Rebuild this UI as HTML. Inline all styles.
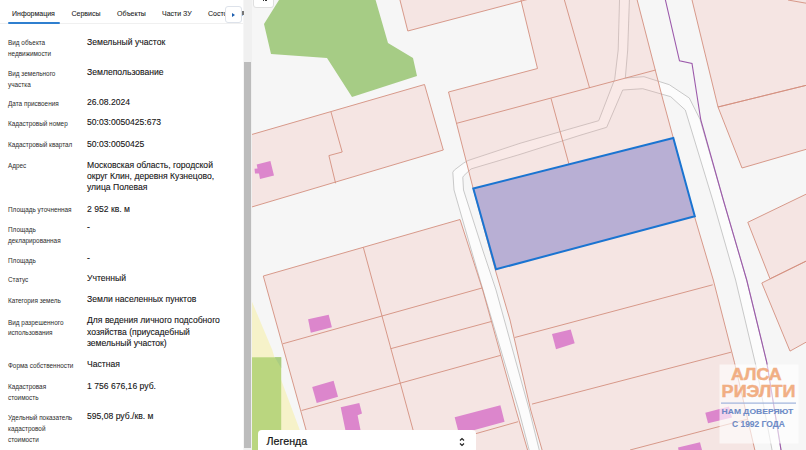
<!DOCTYPE html>
<html><head><meta charset="utf-8">
<style>
*{margin:0;padding:0;box-sizing:border-box}
html,body{width:806px;height:450px;overflow:hidden;background:#f6f6f6;font-family:"Liberation Sans",sans-serif}
#map{position:absolute;left:0;top:0;width:806px;height:450px}
#panel{position:absolute;left:0;top:0;width:243px;height:450px;background:#fff;color:#222}
.tab{position:absolute;top:8.7px;font-size:7px;line-height:9px;color:#1a1a1a;-webkit-text-stroke:0.08px #1a1a1a;white-space:nowrap}
#tabline{position:absolute;left:0;top:23px;width:243px;height:1px;background:#f0f0f0}
#tabact{position:absolute;left:8px;top:22px;width:52px;height:2px;background:#2f7fcf;border-radius:1px}
#arrow{position:absolute;left:225px;top:6px;width:16.5px;height:16.5px;background:#fff;border:1px solid #dde2ea;border-radius:3px}
#arrow:after{content:"";position:absolute;left:6px;top:5.7px;border-left:3px solid #1d5fb0;border-top:2.5px solid transparent;border-bottom:2.5px solid transparent}
#track{position:absolute;left:243.7px;top:0;width:8.3px;height:450px;background:#f0f0f0}
#thumb{position:absolute;left:244px;top:62.3px;width:7px;height:386px;background:#bcbcbc}
.lb{position:absolute;margin-top:1px;left:8px;font-size:6.4px;line-height:10.7px;color:#2c2c2c;white-space:nowrap}
.vl{position:absolute;margin-top:0.4px;left:87px;font-size:8.6px;line-height:11px;color:#151515;-webkit-text-stroke:0.1px #151515;white-space:nowrap}
#legend{position:absolute;left:257.6px;top:429.8px;width:218.8px;height:30px;background:#fff;border-radius:4px}
#legend span{position:absolute;left:9px;top:5px;font-size:10.7px;line-height:12px;color:#151515;-webkit-text-stroke:0.2px #151515}
#topbtn{position:absolute;left:253px;top:-3px;width:21px;height:11px;background:#fff;border:1px solid #e0e0e0;border-radius:3px}
</style></head><body>
<svg id="map" width="806" height="450" viewBox="0 0 806 450">
<rect x="248" y="0" width="558" height="450" fill="#f6f6f6"/>
<!-- green top -->
<polygon points="279,0 264,24 271,54 327,58 352,97 417,76 413,58 388,43 375.6,0" fill="#a6cc85"/>
<!-- yellow -->
<polygon points="248,292 252,301.8 272.3,350 281.2,380 299.8,430 306.5,455 248,455" fill="#f6f2c9"/>
<!-- green rect -->
<rect x="248" y="357.3" width="33.2" height="95" fill="#bad67f"/>
<polygon points="274.8,357.3 281.2,357.3 281.2,368" fill="#aacd82"/>
<!-- road strip -->
<polygon points="530.5,455 518.7,410 483,290 471.3,250 454,190 452.8,172.2 454.4,170 463.3,163.3 467.8,160.6 520,143.3 580,126 598.7,120.7 614.7,79.3 618.2,50 619.6,-3 629.5,-3 627.7,50 625.3,78 644,76.7 669.3,84.7 689.3,98 700,119.3 723.3,200 746.7,280 766.7,362 782,455 773,455 756.7,369 735.6,280 712.7,200 685.3,110 670.7,96.7 642.7,88.7 622.7,90 606.7,127.3 580,135.3 520,154.4 471.1,168.9 463.9,175.6 462.8,177.2 463.5,190 482.7,250 496,290 529.3,410 540.5,455" fill="#fcfcfc" stroke="#c9c9c9" stroke-width="1"/>
<!-- parcels -->
<g fill="rgba(240,168,160,0.22)" stroke="#d4907f" stroke-width="0.9">
<polygon points="248,135.6 424.5,84.5 443.3,150 248,208.1"/>
<polygon points="399.2,-3 407.8,31 536.8,-3"/>
<polygon points="520.2,-3 636.4,-3 663,100 673.3,138 694.5,216.5 713.3,280 734.4,362.2 756,455 543.5,455 530.7,410 510,320 495.3,270 473.3,189 448.5,92 537.5,68.5"/>
<polygon points="263.3,276 460,219.5 482.7,290 516,410 529,455 313,455 300.5,410"/>
<polygon points="691.3,-3 718,107 810,84.4 810,-3"/>
<polygon points="718,107 742,168 810,148.2 810,84.4"/>
<polygon points="747.8,222.3 810,192.3 810,259.2 770,278.8"/>
<polygon points="761.8,283 810,259.2 810,340 790,351.1"/>
</g>
<g fill="none" stroke="#d4907f" stroke-width="0.9">
<polyline points="331,112 342.2,152 328.9,155.6 335.6,183.3"/>
<line x1="564.4" y1="0" x2="589.6" y2="88"/>
<line x1="456.7" y1="123.3" x2="655.6" y2="70"/>
<line x1="551" y1="98.3" x2="569" y2="164.3"/>
<line x1="514.7" y1="337.5" x2="712.7" y2="284.8"/>
<line x1="532" y1="404.1" x2="731.1" y2="352.2"/>
<line x1="630" y1="450" x2="748" y2="419"/>
<line x1="363.3" y1="247.3" x2="418.5" y2="450"/>
<line x1="282.7" y1="343.8" x2="482" y2="288"/>
<line x1="390.7" y1="348.7" x2="491.4" y2="321.5"/>
<line x1="301.6" y1="410.5" x2="500.8" y2="355.3"/>
<line x1="418" y1="450" x2="518.1" y2="421.7"/>
<line x1="788" y1="0" x2="806" y2="3.2"/>
</g>
<!-- buildings -->
<g fill="#dc86cc">
<polygon points="256.7,164.4 270.4,161 274,175.5 260,178.9 259,173.5 255,173.5 254.5,168.7 257.5,168.5"/>
<polygon points="308.1,319.3 328.7,314.8 331.9,327.3 310.8,332.7"/>
<polygon points="312.2,386.9 333.6,380.7 338,396.7 316.7,402.9"/>
<polygon points="340.7,407.3 359.3,402.9 362,413.6 357.6,415.3 360.5,430 346,433"/>
<polygon points="454.7,417.3 500.4,405.2 504.6,421.7 459,434.3"/>
<polygon points="552,334 570.7,329.5 574.7,343.3 556,349.2"/>
<polygon points="705.3,412.7 729,406.5 732,417.5 708,423.3"/>
<polygon points="678,447.6 700,442.3 702.5,452 679,452"/>
</g>
<!-- selected -->
<polygon points="473.3,188.5 673.3,138 694.8,216.2 496,269.3" fill="#b8afd4" stroke="#1a74d1" stroke-width="2" stroke-linejoin="miter"/>
<!-- purple boundary -->
<polyline points="665.4,0 679.5,60.8 692,63.5 700.8,120 723.3,200 746.7,280 766.7,362 781,450" fill="none" stroke="#9c5aab" stroke-width="1.1"/>
<!-- watermark -->
<rect x="719.5" y="364.5" width="79" height="79" fill="rgba(255,255,255,0.62)"/>
<g font-family="Liberation Sans" font-weight="bold" opacity="0.88">
<text x="731" y="379.9" font-size="16.7" fill="#f0a574" stroke="#f0a574" stroke-width="0.5" textLength="50.7" lengthAdjust="spacingAndGlyphs">АЛСА</text>
<text x="721.6" y="397.2" font-size="17.4" fill="#f0a574" stroke="#f0a574" stroke-width="0.5" textLength="73.8" lengthAdjust="spacingAndGlyphs">РИЭЛТИ</text>
<text x="721.6" y="414.2" font-size="7.2" fill="#5a7cc0" stroke="#5a7cc0" stroke-width="0.1" textLength="71.7" lengthAdjust="spacingAndGlyphs">НАМ ДОВЕРЯЮТ</text>
<text x="732" y="426.8" font-size="8.6" fill="#5a7cc0" stroke="#5a7cc0" stroke-width="0.1" textLength="52.9" lengthAdjust="spacingAndGlyphs">С 1992 ГОДА</text>
</g>
<rect x="721" y="402.5" width="75" height="1.2" fill="#9fb3dc"/>
</svg>
<div id="topbtn"><div style="position:absolute;left:8.5px;top:1px;width:1.5px;height:2px;background:#333"></div><div style="position:absolute;left:11px;top:1px;width:1.8px;height:2px;background:#333"></div></div>
<div id="legend"><span>Легенда</span>
<svg style="position:absolute;left:201.3px;top:7px" width="6" height="10" viewBox="0 0 6 10"><path d="M1 3.5 L3 1.5 L5 3.5 M1 6.5 L3 8.5 L5 6.5" fill="none" stroke="#222" stroke-width="1.2"/></svg>
</div>
<div id="panel">
<div class="tab" style="left:12px">Информация</div>
<div class="tab" style="left:71.5px">Сервисы</div>
<div class="tab" style="left:117px">Объекты</div>
<div class="tab" style="left:162px">Части ЗУ</div>
<div class="tab" style="left:208px">Состояние</div>
<div id="tabline"></div>
<div id="tabact"></div>
<div id="arrow"></div><div style="position:absolute;left:241.8px;top:10.8px;width:1.8px;height:4.2px;background:#777"></div>

<div class="lb" style="top:37px">Вид объекта</div>
<div class="lb" style="top:48.3px">недвижимости</div>
<div class="vl" style="top:36.5px">Земельный участок</div>

<div class="lb" style="top:67.5px">Вид земельного</div>
<div class="lb" style="top:78.8px">участка</div>
<div class="vl" style="top:67px">Землепользование</div>

<div class="lb" style="top:98px">Дата присвоения</div>
<div class="vl" style="top:97px">26.08.2024</div>

<div class="lb" style="top:117.5px">Кадастровый номер</div>
<div class="vl" style="top:117px">50:03:0050425:673</div>

<div class="lb" style="top:139px">Кадастровый квартал</div>
<div class="vl" style="top:138.5px">50:03:0050425</div>

<div class="lb" style="top:160px">Адрес</div>
<div class="vl" style="top:159.5px">Московская область, городской</div>
<div class="vl" style="top:170.5px">округ Клин, деревня Кузнецово,</div>
<div class="vl" style="top:181.5px">улица Полевая</div>

<div class="lb" style="top:204px">Площадь уточненная</div>
<div class="vl" style="top:203.5px">2 952 кв. м</div>

<div class="lb" style="top:223.5px">Площадь</div>
<div class="lb" style="top:234.6px">декларированная</div>
<div class="vl" style="top:221.5px">-</div>

<div class="lb" style="top:254.5px">Площадь</div>
<div class="vl" style="top:253px">-</div>

<div class="lb" style="top:273.5px">Статус</div>
<div class="vl" style="top:272.5px">Учтенный</div>

<div class="lb" style="top:295px">Категория земель</div>
<div class="vl" style="top:294px">Земли населенных пунктов</div>

<div class="lb" style="top:316.5px">Вид разрешенного</div>
<div class="lb" style="top:327.3px">использования</div>
<div class="vl" style="top:315px">Для ведения личного подсобного</div>
<div class="vl" style="top:326.5px">хозяйства (приусадебный</div>
<div class="vl" style="top:337.5px">земельный участок)</div>

<div class="lb" style="top:360px">Форма собственности</div>
<div class="vl" style="top:359px">Частная</div>

<div class="lb" style="top:381px">Кадастровая</div>
<div class="lb" style="top:392.2px">стоимость</div>
<div class="vl" style="top:380.5px">1 756 676,16 руб.</div>

<div class="lb" style="top:412px">Удельный показатель</div>
<div class="lb" style="top:423px">кадастровой</div>
<div class="lb" style="top:434px">стоимости</div>
<div class="vl" style="top:411px">595,08 руб./кв. м</div>
</div>
<div id="track"></div>
<div id="thumb"></div>
</body></html>
